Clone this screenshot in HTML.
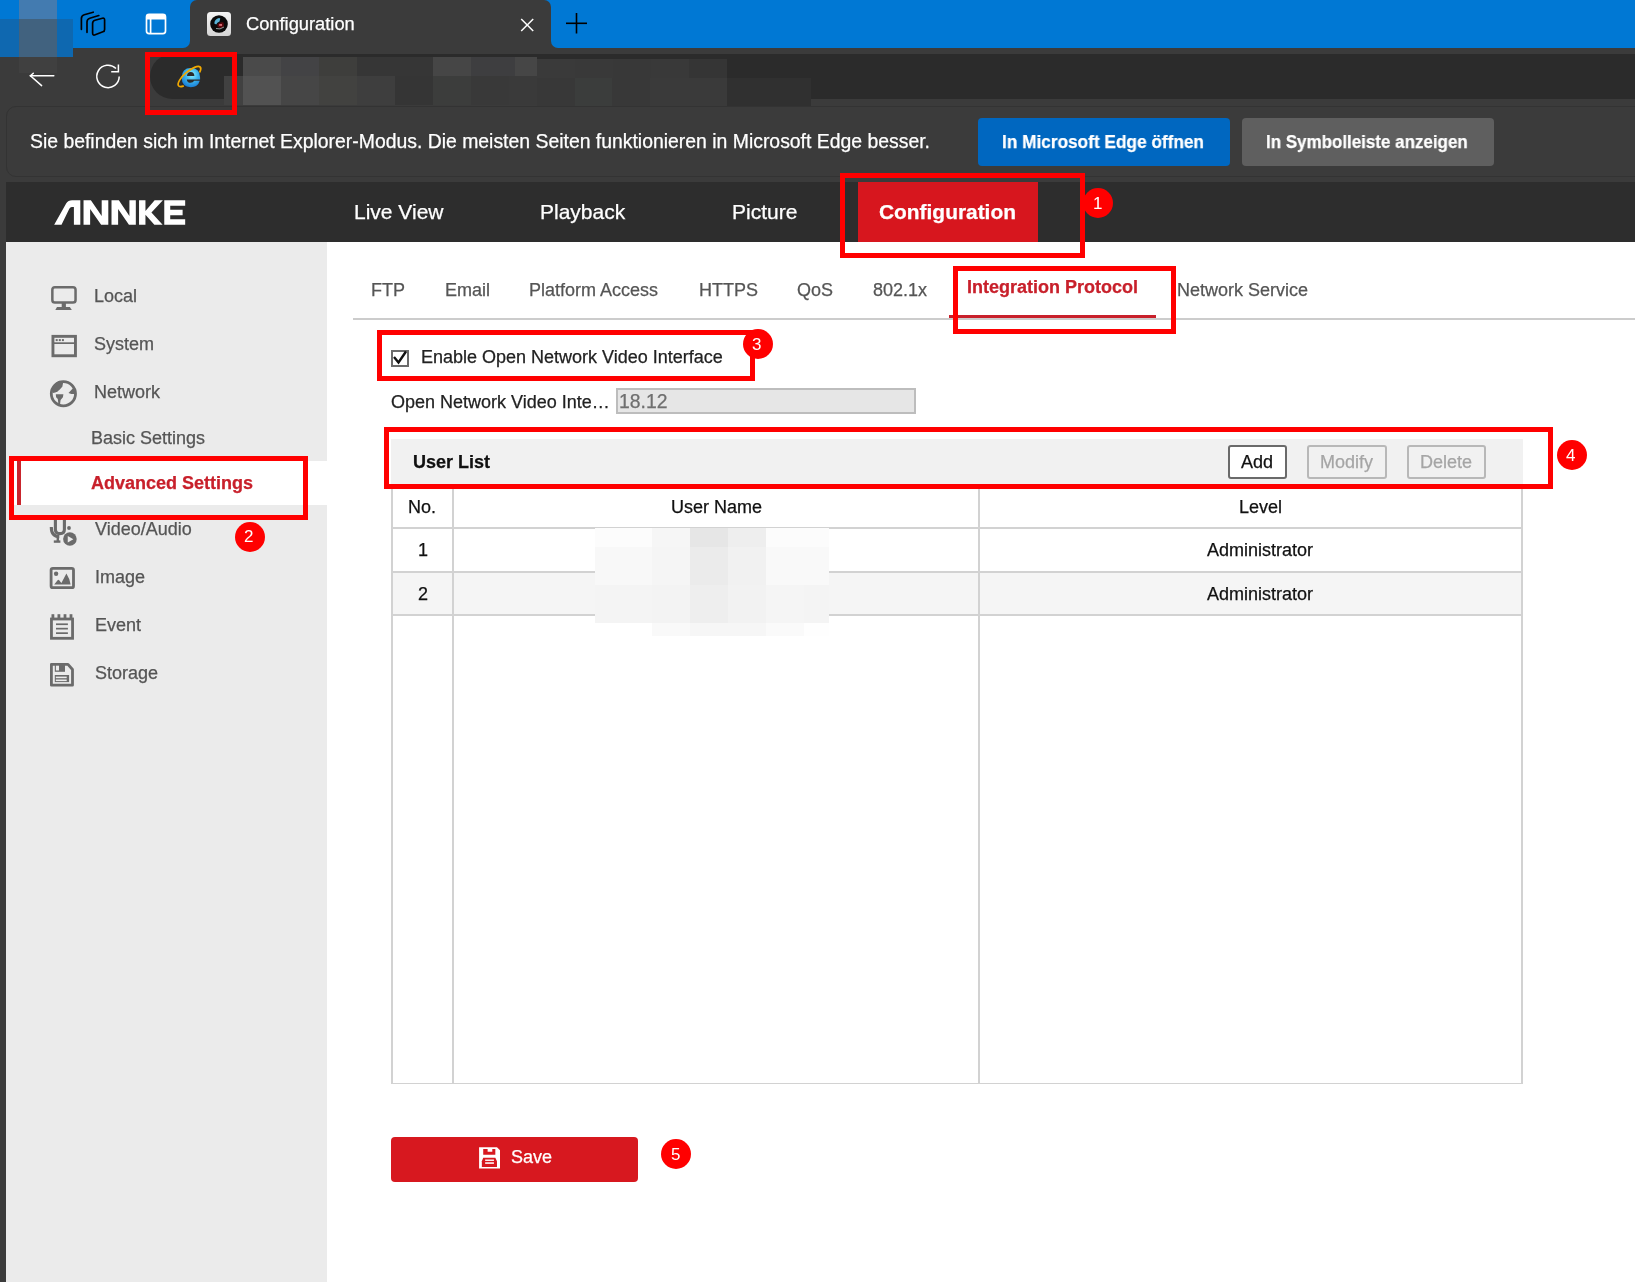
<!DOCTYPE html>
<html><head><meta charset="utf-8"><title>Configuration</title>
<style>
html,body{margin:0;padding:0;}
body{width:1635px;height:1282px;overflow:hidden;position:relative;background:#3b3b3b;font-family:"Liberation Sans",sans-serif;}
.t{position:absolute;line-height:1;white-space:nowrap;will-change:transform;-webkit-text-stroke:0.25px currentColor;}
.b{position:absolute;}
svg{position:absolute;overflow:visible;}
</style></head><body>
<div class="b" style="left:0px;top:0px;width:1635px;height:40px;background:#0078d4;"></div>
<div class="b" style="left:0px;top:0px;width:190px;height:48px;background:#0078d4;border-bottom-right-radius:7px;"></div>
<div class="b" style="left:551px;top:0px;width:1084px;height:48px;background:#0078d4;border-bottom-left-radius:7px;"></div>
<div class="b" style="left:190px;top:0px;width:361px;height:48px;background:#3b3b3b;border-top-left-radius:7px;border-top-right-radius:7px;"></div>
<div class="b" style="left:19px;top:0px;width:38px;height:19px;background:#437bb0;"></div>
<div class="b" style="left:0px;top:19px;width:19px;height:38px;background:#0f68b0;"></div>
<div class="b" style="left:19px;top:19px;width:38px;height:38px;background:#41627f;"></div>
<div class="b" style="left:57px;top:19px;width:16px;height:38px;background:#0e68b0;"></div>
<div class="b" style="left:19px;top:57px;width:38px;height:16px;background:#404040;"></div>
<svg style="left:0;top:0" width="1635" height="120">
<g fill="none" stroke="#000" stroke-width="1.7" stroke-linejoin="round" stroke-linecap="round">
<path d="M92.6 23.5 Q92.6 21 95 20.3 L102.4 18.2 Q104.6 17.6 104.6 19.9 L104.6 29.4 Q104.6 31.2 102.9 31.8 L95.2 34.8 Q92.6 35.8 92.6 33 Z"/>
<path d="M87 32.3 L87 22 Q87 19.2 89.8 18.3 L98.8 15.5"/>
<path d="M81.4 29.3 L81.4 18.5 Q81.4 15.6 84.2 14.7 L93.2 12.2"/>
</g>
<g fill="none" stroke="#fff" stroke-width="1.7">
<rect x="146.5" y="14.3" width="19" height="19.4" rx="2.6"/>
<line x1="150.6" y1="19" x2="150.6" y2="33.5"/>
</g>
<path d="M146.5 17 Q146.5 14.3 149.2 14.3 L162.8 14.3 Q165.5 14.3 165.5 17 L165.5 19.6 L146.5 19.6 Z" fill="#fff"/>
<!-- close X -->
<g stroke="#fff" stroke-width="1.5"><line x1="521.2" y1="19" x2="533.2" y2="31"/><line x1="533.2" y1="19" x2="521.2" y2="31"/></g>
<!-- plus -->
<g stroke="#000" stroke-width="1.6"><line x1="566" y1="23.3" x2="587" y2="23.3"/><line x1="576.5" y1="13" x2="576.5" y2="33.5"/></g>
<!-- favicon -->
<defs><linearGradient id="fg" x1="0" y1="0" x2="0" y2="1"><stop offset="0" stop-color="#f4f4f4"/><stop offset="1" stop-color="#d4d4d4"/></linearGradient></defs>
<rect x="207" y="12" width="24" height="24" rx="3.5" fill="url(#fg)"/>
<circle cx="219" cy="24" r="8.8" fill="#0a0a0a"/>
<path d="M214.3 23.5 Q214.5 19 219 17.9 L220.3 18.5 L219.5 21.5 Q217 22.5 216.2 24.5 Z" fill="#5ab4d8"/>
<path d="M217.5 24 Q220 21.8 223.5 22.5 Q224.5 26 222.5 28 Q219 28.5 217.5 26.5 Z" fill="#5a0a0e"/>
<rect x="219.2" y="24" width="2.8" height="1.9" fill="#d86a74"/>
<path d="M216 28.5 Q220 30 224 27" fill="none" stroke="#9aa8a8" stroke-width="0.9"/>
<!-- back arrow -->
<g stroke="#fff" stroke-width="1.5" stroke-linecap="round" fill="none">
<line x1="30.4" y1="75.8" x2="53.8" y2="75.8"/>
<line x1="30.4" y1="75.8" x2="41.6" y2="85.6"/>
<line x1="30.4" y1="75.8" x2="33.3" y2="73.2"/>
</g>
<!-- refresh -->
<g stroke="#fff" stroke-width="1.5" fill="none" stroke-linecap="butt">
<path d="M119.2 76.5 A11.2 11.2 0 1 1 116 68.6"/>
<path d="M111.2 71.8 L118.4 71.8 L118.4 64.4"/>
</g>
</svg>
<div class="t" style="left:245.50px;top:15.00px;font-size:18.3px;color:#ffffff;">Configuration</div>
<div class="b" style="left:150px;top:54px;width:1485px;height:45px;background:#2b2b2b;border-top-left-radius:22.5px;border-bottom-left-radius:22.5px;"></div>
<div class="b" style="left:224px;top:76px;width:19px;height:29px;background:#414141;"></div>
<div class="b" style="left:243px;top:57px;width:38px;height:19px;background:#4a4a4a;"></div>
<div class="b" style="left:281px;top:57px;width:38px;height:19px;background:#434345;"></div>
<div class="b" style="left:319px;top:57px;width:38px;height:19px;background:#3e3e3c;"></div>
<div class="b" style="left:357px;top:57px;width:38px;height:19px;background:#363636;"></div>
<div class="b" style="left:395px;top:57px;width:38px;height:19px;background:#363636;"></div>
<div class="b" style="left:433px;top:57px;width:38px;height:19px;background:#464646;"></div>
<div class="b" style="left:471px;top:57px;width:44px;height:19px;background:#3e3e40;"></div>
<div class="b" style="left:515px;top:57px;width:22px;height:19px;background:#464646;"></div>
<div class="b" style="left:243px;top:76px;width:38px;height:29px;background:#525252;"></div>
<div class="b" style="left:281px;top:76px;width:38px;height:29px;background:#464646;"></div>
<div class="b" style="left:319px;top:76px;width:38px;height:29px;background:#424240;"></div>
<div class="b" style="left:357px;top:76px;width:38px;height:29px;background:#3e3e3e;"></div>
<div class="b" style="left:395px;top:76px;width:38px;height:29px;background:#353535;"></div>
<div class="b" style="left:433px;top:76px;width:38px;height:29px;background:#3c3d3c;"></div>
<div class="b" style="left:471px;top:76px;width:38px;height:29px;background:#393939;"></div>
<div class="b" style="left:509px;top:76px;width:28px;height:29px;background:#3a3a3a;"></div>
<div class="b" style="left:537px;top:59px;width:38px;height:19px;background:#3a3a3a;"></div>
<div class="b" style="left:575px;top:59px;width:38px;height:19px;background:#393939;"></div>
<div class="b" style="left:613px;top:59px;width:38px;height:19px;background:#383838;"></div>
<div class="b" style="left:651px;top:59px;width:38px;height:19px;background:#393939;"></div>
<div class="b" style="left:689px;top:59px;width:38px;height:19px;background:#353535;"></div>
<div class="b" style="left:537px;top:78px;width:38px;height:28px;background:#383838;"></div>
<div class="b" style="left:575px;top:78px;width:37px;height:28px;background:#3b3d3c;"></div>
<div class="b" style="left:612px;top:78px;width:38px;height:28px;background:#383838;"></div>
<div class="b" style="left:650px;top:78px;width:38px;height:28px;background:#3a3a3a;"></div>
<div class="b" style="left:688px;top:78px;width:39px;height:28px;background:#3a3a3a;"></div>
<div class="b" style="left:727px;top:78px;width:84px;height:28px;background:#303030;"></div>
<div class="b" style="left:811px;top:99px;width:824px;height:6px;background:#3b3b3b;"></div>
<svg style="left:0;top:0" width="300" height="120">
<defs><radialGradient id="ieg" cx="0.55" cy="0.35" r="0.75"><stop offset="0" stop-color="#8ef0ff"/><stop offset="0.45" stop-color="#3cb4ec"/><stop offset="1" stop-color="#0f6fd0"/></radialGradient></defs>
<path fill="url(#ieg)" fill-rule="evenodd" d="M200.1 79.4 L186.8 79.4 Q187.2 82.8 190.6 82.8 Q193 82.8 194.2 80.8 L199.8 80.8 Q197.9 87.2 190.8 87.2 Q181.7 87.2 181.7 77.5 Q181.7 67.9 190.8 67.9 Q200.1 67.9 200.1 77.5 Z M187 76 L194.4 76 Q194.2 72.1 190.7 72.1 Q187.2 72.1 187 76 Z"/>
<path d="M183.22 86.07 A14.3 5.0 -40.6 1 1 199.86 71.81" fill="none" stroke="#f2a900" stroke-width="1.7" stroke-linecap="round"/>
</svg>
<div class="b" style="left:145px;top:52px;width:92px;height:63px;border:5px solid #ff0000;box-sizing:border-box;z-index:10;"></div>
<div class="b" style="left:6px;top:106px;width:1654px;height:71px;background:#3b3b3b;border:1px solid #333333;border-radius:10px;box-sizing:border-box;"></div>
<div class="t" style="left:29.50px;top:132.00px;font-size:19.4px;color:#ffffff;">Sie befinden sich im Internet Explorer-Modus. Die meisten Seiten funktionieren in Microsoft Edge besser.</div>
<div class="b" style="left:978px;top:118px;width:252px;height:48px;background:#0067c0;border-radius:4px;"></div>
<div class="t" style="left:1001.50px;top:133.00px;font-size:18.6px;color:#ffffff;font-weight:bold;transform:scaleX(0.9266);transform-origin:0.00px 0;">In Microsoft Edge öffnen</div>
<div class="b" style="left:1242px;top:118px;width:252px;height:48px;background:#5f5f5f;border-radius:4px;"></div>
<div class="t" style="left:1266.20px;top:133.00px;font-size:18.6px;color:#ffffff;font-weight:bold;transform:scaleX(0.9122);transform-origin:0.00px 0;">In Symbolleiste anzeigen</div>
<div class="b" style="left:6px;top:182px;width:1629px;height:1100px;background:#ffffff;"></div>
<div class="b" style="left:6px;top:182px;width:1629px;height:60px;background:#2d2d2d;"></div>
<svg style="left:45px;top:190px" width="150" height="45" viewBox="0 0 1635 490"><g fill="#fff">
<path d="M100 378 L232 145 Q252 112 295 112 L385 112 L385 378 L315 378 L315 185 L292 185 Q275 185 265 203 L180 378 Z"/>
<path d="M420 112 L500 112 L618 282 L618 112 L690 112 L690 378 L612 378 L492 208 L492 378 L420 378 Z"/>
<path d="M725 112 L805 112 L920 282 L920 112 L990 112 L990 378 L915 378 L797 208 L797 378 L725 378 Z"/>
<path d="M1025 112 L1095 112 L1095 228 L1195 112 L1285 112 L1160 245 L1282 378 L1192 378 L1095 270 L1095 378 L1025 378 Z"/>
<path d="M1300 112 L1528 112 L1528 172 L1365 172 L1365 215 L1500 215 L1500 275 L1365 275 L1365 318 L1528 318 L1528 378 L1300 378 Z"/>
</g></svg>
<div class="t" style="left:353.50px;top:201.00px;font-size:21px;color:#ffffff;">Live View</div>
<div class="t" style="left:540.00px;top:201.00px;font-size:21px;color:#ffffff;">Playback</div>
<div class="t" style="left:732.30px;top:201.00px;font-size:21px;color:#ffffff;">Picture</div>
<div class="b" style="left:858px;top:182px;width:180px;height:60px;background:#d7161e;"></div>
<div class="t" style="left:879.10px;top:202.00px;font-size:20.9px;color:#ffffff;font-weight:bold;">Configuration</div>
<div class="b" style="left:840px;top:173px;width:245px;height:85px;border:5px solid #ff0000;box-sizing:border-box;z-index:10;"></div>
<div class="b" style="left:6px;top:242px;width:321px;height:1040px;background:#ebebeb;"></div>
<div class="t" style="left:94.20px;top:287.00px;font-size:18px;color:#555555;">Local</div>
<div class="t" style="left:94.20px;top:335.00px;font-size:18px;color:#555555;">System</div>
<div class="t" style="left:94.20px;top:383.00px;font-size:18px;color:#555555;">Network</div>
<div class="t" style="left:91.20px;top:429.00px;font-size:18px;color:#555555;">Basic Settings</div>
<div class="b" style="left:9px;top:461px;width:318px;height:44px;background:#ffffff;"></div>
<div class="b" style="left:17px;top:461px;width:4px;height:44px;background:#c9252d;"></div>
<div class="t" style="left:91.20px;top:474.00px;font-size:18px;color:#c8202b;font-weight:bold;">Advanced Settings</div>
<div class="t" style="left:94.70px;top:520.00px;font-size:18px;color:#555555;">Video/Audio</div>
<div class="t" style="left:94.70px;top:568.00px;font-size:18px;color:#555555;">Image</div>
<div class="t" style="left:94.70px;top:616.00px;font-size:18px;color:#555555;">Event</div>
<div class="t" style="left:94.70px;top:664.00px;font-size:18px;color:#555555;">Storage</div>
<svg style="left:0;top:0" width="330" height="700">
<g fill="none" stroke="#6b6b6b">
<!-- local monitor -->
<rect x="52.35" y="287.2" width="23.2" height="15.3" rx="2.6" stroke-width="2.5"/>
<!-- system -->
<rect x="52.95" y="336.35" width="22.5" height="19.4" stroke-width="2.9"/>
<line x1="53" y1="343.15" x2="75.5" y2="343.15" stroke-width="1.7"/>
<!-- globe -->
<circle cx="63.4" cy="393.7" r="12.1" stroke-width="2.8"/>
<!-- image -->
<rect x="51.1" y="568.3" width="22.4" height="19.4" rx="1.8" stroke-width="2.8"/>
<!-- event -->
<rect x="51.45" y="619" width="21.1" height="19.3" stroke-width="2.8"/>
<!-- storage -->
<path d="M51.4 664.3 L68 664.3 L72.5 669.5 L72.5 685.2 L51.4 685.2 Z" stroke-width="2.8" stroke-linejoin="round"/>
</g>
<g fill="#6b6b6b">
<rect x="61.7" y="303" width="4.2" height="4.5"/>
<path d="M57 307 L69.9 307 L71.8 310 L55.3 310 Z"/>
<rect x="55.7" y="339.1" width="2" height="2"/><rect x="58.8" y="339.1" width="2" height="2"/><rect x="61.9" y="339.1" width="2" height="2"/>
<path d="M52.7 388.6 L55.3 383.3 L59.2 380.8 L63.4 381.6 L62.3 386.7 L60 389.2 L57.8 391.2 L55.3 392.6 L53 392.9 Z"/>
<path d="M55.8 394.3 L63.4 394.3 L62.9 397.3 L60.6 399.9 L60 404.6 L58.4 404 L57.8 399 L56.1 397.3 Z"/>
<path d="M68.5 392.9 L72.7 388.4 L75.8 390 L75.8 394 L71.3 394 Z"/>
<circle cx="56.1" cy="573.7" r="2.2"/>
<path d="M54.2 584.6 L57.6 580.2 Q58.4 579.4 59.2 580.2 L61.4 583 L66.4 573.4 L69.3 579.2 L70.6 584.6 Z"/>
<rect x="51.5" y="614.2" width="2.8" height="4"/><rect x="57.5" y="614.2" width="2.8" height="4"/><rect x="63.6" y="614.2" width="2.8" height="4"/><rect x="69.6" y="614.2" width="2.8" height="4"/>
<rect x="56" y="623.4" width="11.9" height="1.7"/><rect x="56" y="627.8" width="11.9" height="1.7"/><rect x="56" y="632.3" width="11.9" height="1.7"/>
<rect x="54.8" y="664" width="10.2" height="7.8"/>
<rect x="54.8" y="675" width="14.3" height="7.1"/>
<!-- video/audio -->
<circle cx="69.9" cy="539" r="6.8"/>
<circle cx="69" cy="528" r="1.9"/>
<rect x="53.8" y="540.4" width="6.6" height="2.4"/>
<rect x="56.6" y="536.5" width="2.4" height="5"/>
</g>
<g fill="#ebebeb">
<rect x="55.9" y="665.7" width="3.1" height="4.8"/>
<rect x="55.8" y="676.6" width="10.9" height="1.6"/><rect x="55.8" y="679.5" width="10.9" height="1.6"/>
<path d="M67.75 536 L73.35 539.3 L67.75 542.6 Z"/>
</g>
<g fill="none" stroke="#6b6b6b" stroke-width="3.1">
<path d="M55.4 516 L55.4 529.5 Q55.4 533.6 59.9 533.6 Q64.4 533.6 64.4 529.5 L64.4 516"/>
<path d="M51.3 527 Q51.3 536.6 59.3 536.6"/>
</g>
</svg>
<div class="b" style="left:9px;top:456px;width:299px;height:64px;border:5px solid #ff0000;box-sizing:border-box;z-index:10;"></div>
<div class="b" style="left:234.5px;top:521.5px;width:30px;height:30px;border-radius:50%;background:#ff0000;z-index:11;"></div>
<div class="t" style="left:244.20px;top:528.00px;font-size:17px;color:#ffffff;z-index:12;-webkit-text-stroke:0;">2</div>
<div class="b" style="left:353px;top:318px;width:1282px;height:2px;background:#cccccc;"></div>
<div class="t" style="left:370.90px;top:281.00px;font-size:18px;color:#555555;">FTP</div>
<div class="t" style="left:445.00px;top:281.00px;font-size:18px;color:#555555;">Email</div>
<div class="t" style="left:529.40px;top:281.00px;font-size:18px;color:#555555;">Platform Access</div>
<div class="t" style="left:699.20px;top:281.00px;font-size:18px;color:#555555;">HTTPS</div>
<div class="t" style="left:797.30px;top:281.00px;font-size:18px;color:#555555;">QoS</div>
<div class="t" style="left:872.70px;top:281.00px;font-size:18px;color:#555555;">802.1x</div>
<div class="t" style="left:966.90px;top:278.00px;font-size:18px;color:#c8202b;font-weight:bold;">Integration Protocol</div>
<div class="b" style="left:949px;top:315px;width:207px;height:3px;background:#c8202b;"></div>
<div class="t" style="left:1176.90px;top:281.00px;font-size:18px;color:#555555;">Network Service</div>
<div class="b" style="left:953px;top:266px;width:223px;height:68px;border:5px solid #ff0000;box-sizing:border-box;z-index:10;"></div>
<div class="b" style="left:1083.0px;top:187.6px;width:30px;height:30px;border-radius:50%;background:#ff0000;z-index:11;"></div>
<div class="t" style="left:1092.70px;top:195.00px;font-size:17px;color:#ffffff;z-index:12;-webkit-text-stroke:0;">1</div>
<div class="b" style="left:391px;top:349.5px;width:17.5px;height:17.0px;border:2px solid #6b6b6b;box-sizing:border-box;background:#fff;"></div>
<svg style="left:0;top:0" width="500" height="400"><path d="M394 357 L398.5 362.5 L406 351.5" fill="none" stroke="#111" stroke-width="2.4"/></svg>
<div class="t" style="left:420.90px;top:348.00px;font-size:18px;color:#222222;">Enable Open Network Video Interface</div>
<div class="b" style="left:377px;top:330px;width:378px;height:51px;border:5px solid #ff0000;box-sizing:border-box;z-index:10;"></div>
<div class="b" style="left:742.5px;top:328.5px;width:30px;height:30px;border-radius:50%;background:#ff0000;z-index:11;"></div>
<div class="t" style="left:752.20px;top:336.00px;font-size:17px;color:#ffffff;z-index:12;-webkit-text-stroke:0;">3</div>
<div class="t" style="left:390.50px;top:393.00px;font-size:18px;color:#222222;">Open Network Video Inte…</div>
<div class="b" style="left:616px;top:388px;width:300px;height:26px;background:#e6e6e6;border:2px solid #bdbdbd;box-sizing:border-box;"></div>
<div class="t" style="left:618.50px;top:392.00px;font-size:19.4px;color:#6f6f6f;">18.12</div>
<div class="b" style="left:391px;top:439px;width:1132px;height:45px;background:#f1f1f1;"></div>
<div class="t" style="left:413.00px;top:453.00px;font-size:18px;color:#111111;font-weight:bold;">User List</div>
<div class="b" style="left:1228px;top:444.5px;width:59px;height:34.5px;background:#fff;border:2px solid #6a6a6a;border-radius:3px;box-sizing:border-box;"></div>
<div class="t" style="left:1240.50px;top:453.00px;font-size:18px;color:#111111;">Add</div>
<div class="b" style="left:1307px;top:444.5px;width:80px;height:34.5px;background:#f1f1f1;border:2px solid #b8b8b8;border-radius:3px;box-sizing:border-box;"></div>
<div class="t" style="left:1319.50px;top:453.00px;font-size:18px;color:#a5a5a5;">Modify</div>
<div class="b" style="left:1407px;top:444.5px;width:79px;height:34.5px;background:#f1f1f1;border:2px solid #b8b8b8;border-radius:3px;box-sizing:border-box;"></div>
<div class="t" style="left:1419.90px;top:453.00px;font-size:18px;color:#a5a5a5;">Delete</div>
<div class="b" style="left:391px;top:484px;width:1132px;height:600px;background:#ffffff;"></div>
<div class="b" style="left:393px;top:573px;width:1128px;height:41px;background:#f5f5f5;"></div>
<div class="b" style="left:391px;top:484px;width:2px;height:600px;background:#d2d2d2;"></div>
<div class="b" style="left:1521px;top:484px;width:2px;height:600px;background:#d2d2d2;"></div>
<div class="b" style="left:452px;top:484px;width:2px;height:600px;background:#d2d2d2;"></div>
<div class="b" style="left:978px;top:484px;width:2px;height:600px;background:#d2d2d2;"></div>
<div class="b" style="left:391px;top:527px;width:1132px;height:2px;background:#d2d2d2;"></div>
<div class="b" style="left:391px;top:571px;width:1132px;height:2px;background:#d2d2d2;"></div>
<div class="b" style="left:391px;top:614px;width:1132px;height:2px;background:#d2d2d2;"></div>
<div class="b" style="left:391px;top:1083px;width:1132px;height:1px;background:#d2d2d2;"></div>
<div class="t" style="left:407.90px;top:498.00px;font-size:18px;color:#111111;">No.</div>
<div class="t" style="left:671.10px;top:498.00px;font-size:18px;color:#111111;">User Name</div>
<div class="t" style="left:1238.80px;top:498.00px;font-size:18px;color:#111111;">Level</div>
<div class="t" style="left:418.00px;top:541.00px;font-size:18px;color:#111111;">1</div>
<div class="t" style="left:418.00px;top:585.00px;font-size:18px;color:#111111;">2</div>
<div class="t" style="left:1206.80px;top:541.00px;font-size:18px;color:#111111;">Administrator</div>
<div class="t" style="left:1206.80px;top:585.00px;font-size:18px;color:#111111;">Administrator</div>
<div class="b" style="left:595px;top:528px;width:57px;height:19px;background:#fcfcfc;"></div>
<div class="b" style="left:652px;top:528px;width:38px;height:19px;background:#f6f6f6;"></div>
<div class="b" style="left:690px;top:528px;width:38px;height:19px;background:#e6e6e6;"></div>
<div class="b" style="left:728px;top:528px;width:38px;height:19px;background:#eeeeee;"></div>
<div class="b" style="left:766px;top:528px;width:38px;height:19px;background:#fcfcfc;"></div>
<div class="b" style="left:804px;top:528px;width:25px;height:19px;background:#fcfcfc;"></div>
<div class="b" style="left:595px;top:547px;width:57px;height:38px;background:#f8f8f8;"></div>
<div class="b" style="left:652px;top:547px;width:38px;height:38px;background:#f5f5f5;"></div>
<div class="b" style="left:690px;top:547px;width:38px;height:38px;background:#ebebeb;"></div>
<div class="b" style="left:728px;top:547px;width:38px;height:38px;background:#f1f1f1;"></div>
<div class="b" style="left:766px;top:547px;width:38px;height:38px;background:#f9f9f9;"></div>
<div class="b" style="left:804px;top:547px;width:25px;height:38px;background:#f9f9f9;"></div>
<div class="b" style="left:595px;top:585px;width:57px;height:38px;background:#f4f4f4;"></div>
<div class="b" style="left:652px;top:585px;width:38px;height:38px;background:#f3f3f3;"></div>
<div class="b" style="left:690px;top:585px;width:38px;height:38px;background:#eeeeee;"></div>
<div class="b" style="left:728px;top:585px;width:38px;height:38px;background:#f2f2f2;"></div>
<div class="b" style="left:766px;top:585px;width:38px;height:38px;background:#f5f5f5;"></div>
<div class="b" style="left:804px;top:585px;width:25px;height:38px;background:#f4f4f4;"></div>
<div class="b" style="left:595px;top:623px;width:57px;height:13px;background:#ffffff;"></div>
<div class="b" style="left:652px;top:623px;width:38px;height:13px;background:#f9f9f9;"></div>
<div class="b" style="left:690px;top:623px;width:38px;height:13px;background:#f6f6f6;"></div>
<div class="b" style="left:728px;top:623px;width:38px;height:13px;background:#f6f6f6;"></div>
<div class="b" style="left:766px;top:623px;width:38px;height:13px;background:#fafafa;"></div>
<div class="b" style="left:804px;top:623px;width:25px;height:13px;background:#fefefe;"></div>
<div class="b" style="left:384px;top:427px;width:1169px;height:62px;border:5px solid #ff0000;box-sizing:border-box;z-index:10;"></div>
<div class="b" style="left:1556.5px;top:439.7px;width:30px;height:30px;border-radius:50%;background:#ff0000;z-index:11;"></div>
<div class="t" style="left:1566.20px;top:447.00px;font-size:17px;color:#ffffff;z-index:12;-webkit-text-stroke:0;">4</div>
<div class="b" style="left:391px;top:1137px;width:247px;height:45px;background:#d7181f;border-radius:4px;"></div>
<svg style="left:470px;top:1140px" width="90" height="35" viewBox="0 0 1635 636">
<path d="M165 130 L490 130 L545 185 L545 520 L165 520 Z" fill="#fff"/>
<path d="M240 165 L320 165 L320 215 L405 215 L405 165 L460 165 L460 270 L240 270 Z" fill="#d7181f"/>
<path d="M240 322 L460 322 L490 385 L490 490 L215 490 L215 385 Z" fill="#d7181f"/>
<rect x="275" y="355" width="160" height="25" fill="#fff"/>
<rect x="275" y="405" width="160" height="28" fill="#fff"/>
</svg>
<div class="t" style="left:511.00px;top:1148.00px;font-size:18px;color:#ffffff;">Save</div>
<div class="b" style="left:661.4px;top:1138.6px;width:30px;height:30px;border-radius:50%;background:#ff0000;z-index:11;"></div>
<div class="t" style="left:671.10px;top:1146.00px;font-size:17px;color:#ffffff;z-index:12;-webkit-text-stroke:0;">5</div>
</body></html>
